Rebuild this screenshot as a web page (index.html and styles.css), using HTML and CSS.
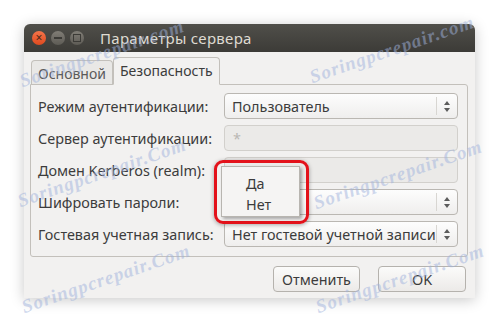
FILE: index.html
```html
<!DOCTYPE html>
<html lang="ru">
<head>
    <meta charset="UTF-8">
    <title>Параметры сервера</title>
    <link rel="stylesheet" href="styles.css">
</head>
<body>
    <div class="window">
        <div class="titlebar">
            <div class="controls">
                <span class="btn close">&times;</span>
                <span class="btn min"><i></i></span>
                <span class="btn max"><i></i></span>
            </div>
            <div class="title">Параметры сервера</div>
        </div>
        <div class="content">
            <div class="tabs">
                <div class="tab">Основной</div>
                <div class="tab active">Безопасность</div>
            </div>
            <div class="panel">
                <div class="label">Режим аутентификации:</div>
                <div class="combo"><span>Пользователь</span><span class="spin"><b class="up"></b><b class="down"></b></span></div>

                <div class="label">Сервер аутентификации:</div>
                <div class="entry disabled">*</div>

                <div class="label">Домен Kerberos (realm):</div>
                <div class="entry disabled"></div>

                <div class="label">Шифровать пароли:</div>
                <div class="combo"><span></span><span class="spin"><b class="up"></b><b class="down"></b></span></div>

                <div class="label">Гостевая учетная запись:</div>
                <div class="combo"><span>Нет гостевой учетной записи</span><span class="spin"><b class="up"></b><b class="down"></b></span></div>
            </div>
            <div class="buttons">
                <div class="button">Отменить</div>
                <div class="button">OK</div>
            </div>
        </div>
    </div>

    <!-- выпадающий список поверх формы -->
    <div class="popup">
        <div class="menu">
            <div class="item">Да</div>
            <div class="item">Нет</div>
        </div>
    </div>

    <div class="wm" style="left:24px; top:70px">Soringpcrepair.com</div>
    <div class="wm" style="left:314px; top:66px">Soringpcrepair.com</div>
    <div class="wm" style="left:22px; top:190px">Soringpcrepair.Com</div>
    <div class="wm" style="left:318px; top:192px">Soringpcrepair.Com</div>
    <div class="wm" style="left:26px; top:296px">Soringpcrepair.Com</div>
    <div class="wm" style="left:320px; top:296px">Soringpcrepair.Com</div>
</body>
</html>
```

FILE: styles.css
```css
body {
    margin: 0;
    background: #fff;
    font-family: "Noto Sans", "DejaVu Sans", sans-serif;
    font-size: 13.5px;
    color: #3c3c3c;
    position: relative;
    width: 498px;
    height: 323px;
    overflow: hidden;
}
.window {
    margin: 24px 0 0 24px;
    width: 451px;
    height: 274px;
    background: #f2f1f0;
    border-radius: 6px 6px 0 0;
    box-shadow: 0 2px 14px rgba(0, 0, 0, 0.22);
    display: flex;
    flex-direction: column;
}
.titlebar {
    height: 28px;
    background: linear-gradient(#504f4a, #3c3b37);
    border-radius: 6px 6px 0 0;
    display: flex;
    align-items: center;
    padding-left: 8px;
}
.controls {
    display: flex;
    gap: 5px;
}
.btn {
    width: 14px;
    height: 14px;
    border-radius: 50%;
    background: linear-gradient(#807d76, #5d5b55);
    display: flex;
    align-items: center;
    justify-content: center;
    font-size: 12px;
    line-height: 1;
    color: #4a2a1a;
}
.btn.close {
    background: linear-gradient(#f5744a, #df4a1f);
}
.btn.min i {
    width: 8px;
    height: 2px;
    background: #3c3b37;
}
.btn.max i {
    width: 6px;
    height: 6px;
    border: 1px solid #3c3b37;
}
.title {
    margin-left: 16px;
    color: #dfdbd2;
    font-size: 15px;
    letter-spacing: 0.3px;
}
.content {
    padding: 6px 7px 6px 6px;
    display: flex;
    flex-direction: column;
}
.tabs {
    display: flex;
    align-items: flex-end;
    padding-left: 1px;
    height: 27px;
    margin-bottom: -1px;
}
.tab {
    height: 24px;
    padding: 0 6px;
    border: 1px solid #c3c0bb;
    border-bottom: none;
    border-radius: 4px 4px 0 0;
    background: #e9e8e6;
    color: #5a5a5a;
    font-size: 14px;
    line-height: 25px;
}
.tab.active {
    height: 26px;
    background: #f2f1f0;
    color: #3c3c3c;
    position: relative;
    z-index: 1;
    border-bottom: 1px solid #f2f1f0;
}
.panel {
    height: 154px;
    border: 1px solid #c3c0bb;
    border-radius: 0 3px 3px 3px;
    padding: 8px 9px 9px 7px;
    display: grid;
    grid-template-columns: 1fr 234px;
    grid-auto-rows: 26px;
    row-gap: 6px;
    align-items: center;
}
.label {
    font-size: 14.4px;
    white-space: nowrap;
}
.combo, .entry {
    height: 26px;
    box-sizing: border-box;
    border: 1px solid #bab7b2;
    border-radius: 4px;
    display: flex;
    align-items: center;
    font-size: 14.4px;
}
.combo {
    background: linear-gradient(#fdfdfd, #efeeed);
    padding-left: 7px;
}
.combo span:first-child {
    flex: 1;
    white-space: nowrap;
    overflow: hidden;
}
.spin {
    width: 20px;
    height: 18px;
    border-left: 1px solid #d8d6d2;
    display: flex;
    flex-direction: column;
    align-items: center;
    justify-content: center;
    gap: 3px;
}
.spin b {
    width: 0;
    height: 0;
    border-left: 3px solid transparent;
    border-right: 3px solid transparent;
}
.spin .up {
    border-bottom: 4px solid #5c5c5c;
}
.spin .down {
    border-top: 4px solid #5c5c5c;
}
.entry.disabled {
    background: #ebeae8;
    border-color: #d2d0cc;
    color: #b9b7b3;
    padding-left: 8px;
}
.buttons {
    display: flex;
    justify-content: flex-end;
    gap: 18px;
    margin-top: 9px;
    padding-right: 2px;
}
.button {
    height: 26px;
    box-sizing: border-box;
    border: 1px solid #b5b2ad;
    border-radius: 4px;
    background: linear-gradient(#fbfbfa, #eceae8);
    display: flex;
    align-items: center;
    justify-content: center;
    width: 87px;
    font-size: 14.4px;
}
.button + .button {
    width: 88px;
}
.popup {
    position: absolute;
    left: 214px;
    top: 160px;
    width: 95px;
    height: 64px;
    box-sizing: border-box;
    border: 3px solid #e3121b;
    border-radius: 9px;
    box-shadow: 0 1px 4px rgba(0, 0, 0, 0.35);
    padding: 3px 6px 4px 4px;
}
.menu {
    height: 100%;
    background: #f5f4f3;
    border: 1px solid #b8b5b0;
    box-shadow: 2px 2px 3px rgba(0, 0, 0, 0.3);
    box-sizing: border-box;
    padding-top: 6px;
}
.item {
    height: 21px;
    line-height: 21px;
    padding-left: 24px;
    font-size: 14.4px;
}
.wm {
    position: absolute;
    z-index: 2;
    transform: rotate(-19deg);
    transform-origin: left bottom;
    font-family: "Liberation Serif", serif;
    font-style: italic;
    font-weight: bold;
    font-size: 19px;
    letter-spacing: 1px;
    color: rgba(160, 178, 220, 0.5);
    white-space: nowrap;
    pointer-events: none;
}
```
